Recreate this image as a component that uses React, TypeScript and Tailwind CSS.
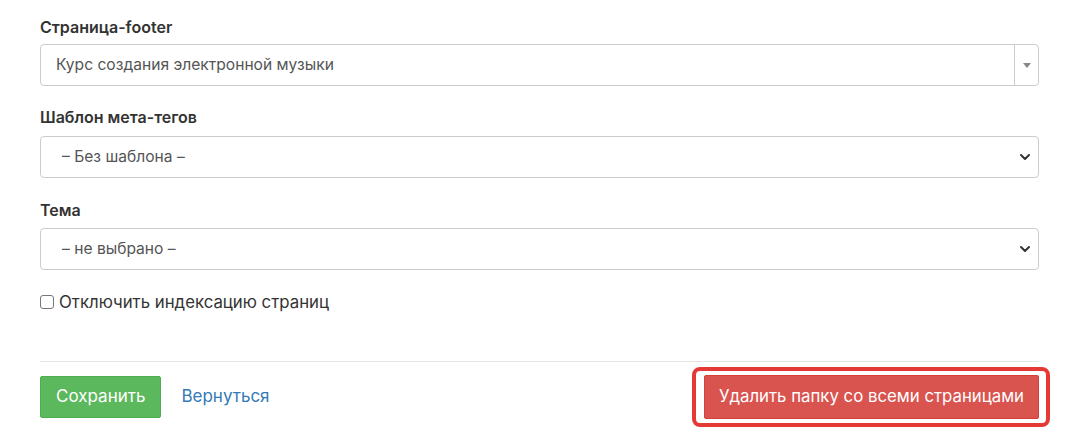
import { ChevronDown } from "lucide-react";

function Label({ children }: { children: React.ReactNode }) {
  return <p className="text-[16px] font-semibold leading-[20px] text-[#333]">{children}</p>;
}

function SelectBox({ value, chosen }: { value: string; chosen?: boolean }) {
  return (
    <div className="flex h-[42px] items-center rounded-[4px] border border-[#ccc] bg-white text-[15.6px] text-[#555]">
      <span className={`flex-1 truncate ${chosen ? "pl-[15px]" : "pl-[21px]"}`}>{value}</span>
      {chosen ? (
        <span className="flex h-full w-[24px] items-center justify-center border-l border-[#ccc]">
          <span className="h-0 w-0 border-x-[4px] border-t-[5px] border-x-transparent border-t-[#888]" />
        </span>
      ) : (
        <ChevronDown className="mr-[5px] h-[16px] w-[16px] text-[#333]" strokeWidth={3} />
      )}
    </div>
  );
}

export default function App() {
  return (
    <div className="min-h-[435px] bg-white font-['Inter','Noto_Sans',sans-serif] text-[#333]">
      <div className="ml-[40px] w-[999px] pt-[17px]">
        <Label>Страница-footer</Label>
        <div className="mt-[7px]">
          <SelectBox value="Курс создания электронной музыки" chosen />
        </div>

        <div className="mt-[21px]">
          <Label>Шаблон мета-тегов</Label>
        </div>
        <div className="mt-[9px]">
          <SelectBox value="– Без шаблона –" />
        </div>

        <div className="mt-[22px]">
          <Label>Тема</Label>
        </div>
        <div className="mt-[8px]">
          <SelectBox value="– не выбрано –" />
        </div>

        <label className="mt-[22px] flex items-center gap-[5px] text-[16.8px] leading-[20px] text-[#333]">
          <span className="h-[14px] w-[14px] rounded-[3px] border border-[#767676] bg-white" />
          Отключить индексацию страниц
        </label>

        <div className="mt-[49px] border-t border-[#e5e5e5]" />

        <div className="mt-[13px] flex items-center">
          <button className="h-[42px] rounded-[2px] border border-[#4cae4c] bg-[#5cb85c] px-[15px] text-[17px] text-white">
            Сохранить
          </button>
          <a className="ml-[20px] text-[17px] text-[#337ab7]">Вернуться</a>
          <div className="relative ml-auto">
            <div className="absolute -bottom-[8px] -left-[12px] -right-[11px] -top-[8px] rounded-[8px] border-[4px] border-[#e53935]" />
            <button className="relative h-[44px] w-[335px] rounded-[2px] border border-[#d43f3a] bg-[#d9534f] text-[16.8px] text-white">
              Удалить папку со всеми страницами
            </button>
          </div>
        </div>
      </div>
    </div>
  );
}
